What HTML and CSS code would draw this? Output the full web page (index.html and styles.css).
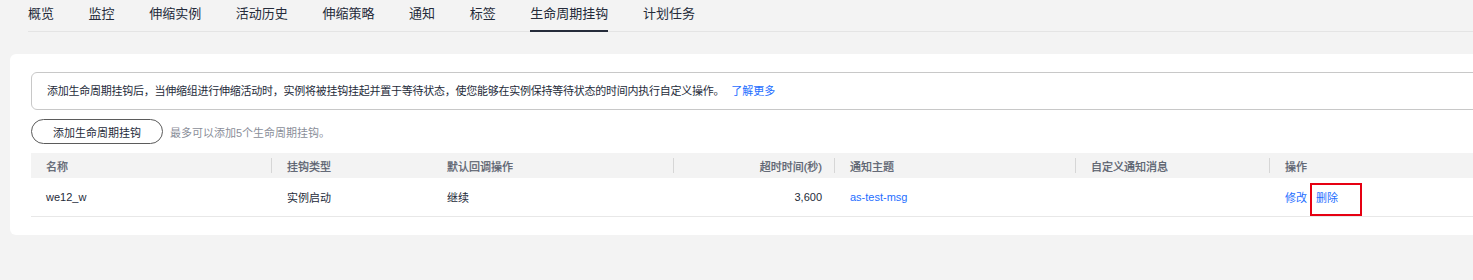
FILE: index.html
```html
<!DOCTYPE html>
<html lang="zh-CN">
<head>
    <meta charset="UTF-8">
    <meta name="viewport" content="width=device-width, initial-scale=1.0">
    <title>生命周期挂钩</title>
    <link rel="stylesheet" href="styles.css">
</head>
<body>
    <div id="wrap">
        <ul class="tabs">
            <li>概览</li>
            <li>监控</li>
            <li>伸缩实例</li>
            <li>活动历史</li>
            <li>伸缩策略</li>
            <li>通知</li>
            <li>标签</li>
            <li class="on">生命周期挂钩</li>
            <li>计划任务</li>
        </ul>

        <div class="card">
            <div class="notice"><span class="msg">添加生命周期挂钩后，当伸缩组进行伸缩活动时，实例将被挂钩挂起并置于等待状态，使您能够在实例保持等待状态的时间内执行自定义操作。</span><a class="link more">了解更多</a></div>

            <div class="toolbar">
                <button class="btn">添加生命周期挂钩</button>
                <span class="hint">最多可以添加5个生命周期挂钩。</span>
            </div>

            <table class="grid">
                <colgroup>
                    <col class="c1"><col class="c2"><col class="c3"><col class="c4"><col class="c5"><col class="c6"><col class="c7">
                </colgroup>
                <thead>
                    <tr>
                        <th class="sep">名称</th>
                        <th>挂钩类型</th>
                        <th class="sep">默认回调操作</th>
                        <th class="sep num">超时时间(秒)</th>
                        <th class="sep">通知主题</th>
                        <th class="sep">自定义通知消息</th>
                        <th>操作</th>
                    </tr>
                </thead>
                <tbody>
                    <tr>
                        <td>we12_w</td>
                        <td>实例启动</td>
                        <td>继续</td>
                        <td class="num">3,600</td>
                        <td><a class="link">as-test-msg</a></td>
                        <td></td>
                        <td class="ops">
                            <a class="link">修改</a>
                            <span class="mark"><a class="link">删除</a></span>
                        </td>
                    </tr>
                </tbody>
            </table>
        </div>
    </div>
</body>
</html>
```

FILE: styles.css
```css
* {
    margin: 0;
    padding: 0;
    box-sizing: border-box;
}

body {
    width: 100%;
    height: 100vh;
    background: #f3f3f3;
    font-family: "Liberation Sans", "Noto Sans CJK SC", sans-serif;
    font-size: 11px;
    color: #252b3a;
    overflow: hidden;
}

#wrap {
    width: 1500px;
}

/* tabs */
.tabs {
    list-style: none;
    display: flex;
    margin-left: 28px;
    height: 32px;
    border-bottom: 1px solid #e4e4e4;
}

.tabs li {
    font-size: 13px;
    line-height: 27px;
    margin-right: 34.6px;
    color: #252b3a;
    border-bottom: 2px solid transparent;
    height: 32px;
}

.tabs li.on {
    border-bottom-color: #252b3a;
}

/* card */
.card {
    background: #fff;
    margin: 22px 0 0 10px;
    border-radius: 6px;
    padding: 18px 0 18px 21px;
}

.notice {
    border: 1px solid #c8c8c8;
    border-radius: 6px;
    height: 38px;
    line-height: 36px;
    padding-left: 15px;
}

.notice .msg {
    letter-spacing: -0.25px;
}

.link {
    color: #1e6eff;
    cursor: pointer;
}

.more {
    margin-left: 7px;
}

.toolbar {
    display: flex;
    align-items: center;
    margin-top: 9px;
    height: 25px;
}

.btn {
    width: 132px;
    height: 25px;
    border: 1px solid #5b5b5b;
    border-radius: 13px;
    background: #fff;
    font: inherit;
    color: #252b3a;
}

.hint {
    color: #8a8e99;
    margin-left: 7px;
}

/* table */
.grid {
    margin-top: 9px;
    border-collapse: collapse;
    table-layout: fixed;
    width: 1469px;
}

.c1 { width: 241px; }
.c2 { width: 160px; }
.c3 { width: 242px; }
.c4 { width: 161px; }
.c5 { width: 241px; }
.c6 { width: 194px; }
.c7 { width: 230px; }

.grid th {
    background: #f3f3f3;
    height: 25px;
    text-align: left;
    font-weight: normal;
    color: #575d6c;
    padding: 0 15px;
    position: relative;
    -webkit-text-stroke: 0.25px #575d6c;
}

.grid th.sep::after {
    content: "";
    position: absolute;
    right: 0;
    top: 5px;
    height: 15px;
    border-right: 1px solid #d6d6d6;
}

.grid td {
    height: 38px;
    padding: 0 15px;
    border-bottom: 1px solid #e8e8e8;
    white-space: nowrap;
}

.grid .num {
    text-align: right;
    padding-right: 13px;
}

.ops .mark {
    position: relative;
    margin-left: 6px;
}

.ops .mark::after {
    content: "";
    position: absolute;
    left: -6px;
    top: -9px;
    width: 48px;
    height: 29px;
    border: 2px solid #e60012;
}
```
